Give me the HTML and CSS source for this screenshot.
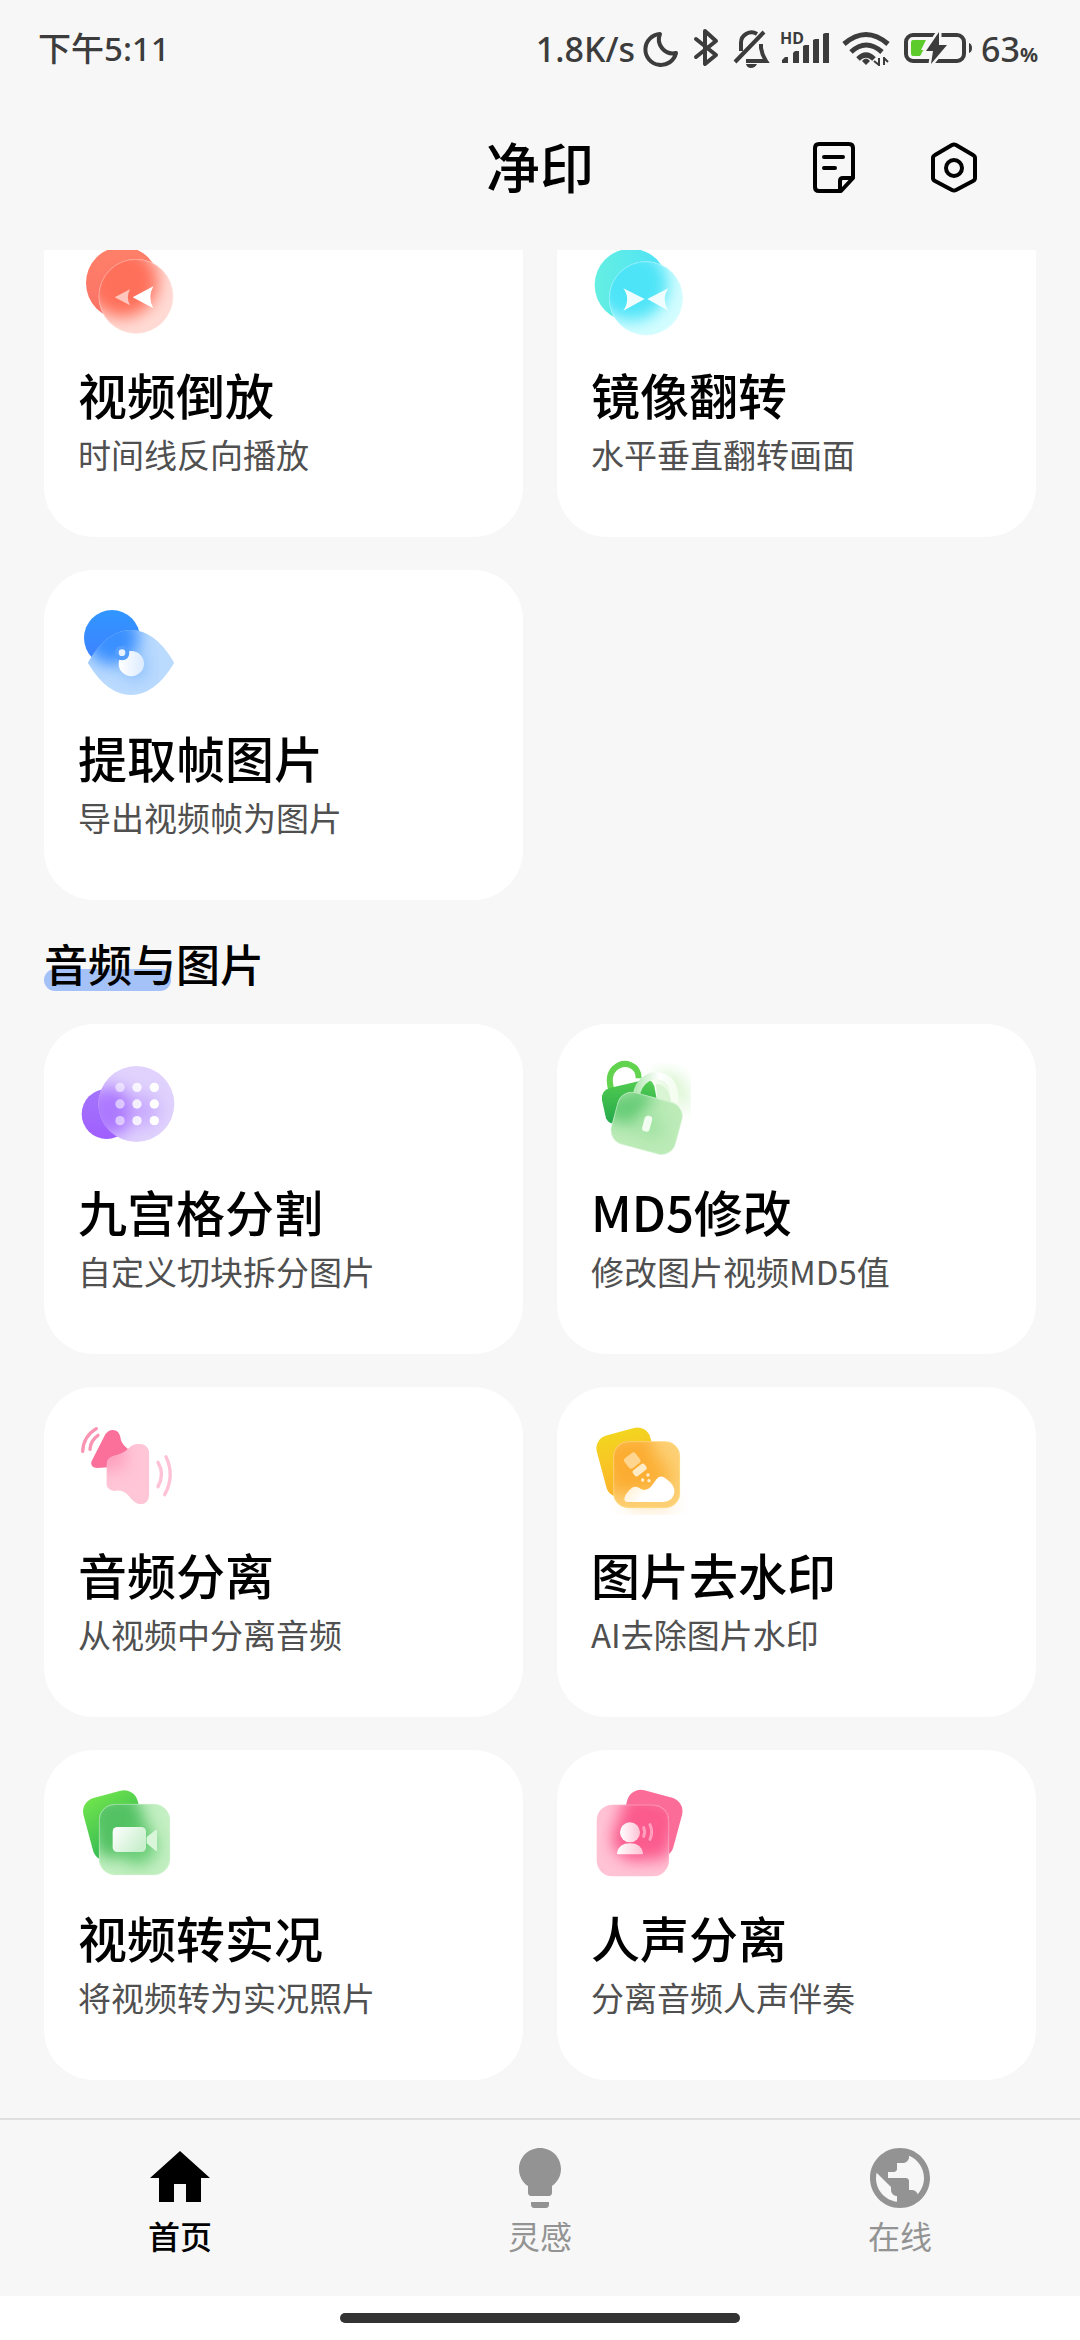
FILE: index.html
```html
<!DOCTYPE html>
<html lang="zh-CN">
<head>
<meta charset="utf-8">
<meta name="viewport" content="width=device-width, initial-scale=1">
<title>净印</title>
<link rel="stylesheet" href="styles.css">
</head>
<body>
<div class="status">
  <span class="status-time">下午5:11</span>
  <div class="status-right">
    <span class="status-speed">1.8K/s</span>
    <svg class="st-moon" viewBox="640 24 44 50" fill="none" stroke="#3c3c3c" stroke-width="4" stroke-linejoin="round"><path d="M659 34A15.500 15.500 0 1 0 675 53A14 14 0 0 1 659 34Z"/></svg>
    <svg class="st-bt" viewBox="684 24 40 50" fill="none" stroke="#3c3c3c" stroke-width="4" stroke-linejoin="round" stroke-linecap="round"><path d="M695 39L715 55L704 64V31L715 41L695 57"/></svg>
    <svg class="st-bell" viewBox="724 24 50 50" fill="none" stroke="#3c3c3c" stroke-width="4"><path d="M740 51V43A10.500 10.500 0 0 1 756 34M763 32L734 62M760 44V48Q761 55 765 61H745"/><path d="M745 64H756Q754 68 750 68T745 64Z" fill="#3c3c3c" stroke="none"/></svg>
    <svg class="st-signal" viewBox="774 24 62 50" fill="#3c3c3c"><path d="M781 63V60L784 57H787V63ZM792 63V53L794 51H798V63ZM802 63V46L804 45H808V63ZM812 63V40L814 39H818V63ZM822 63V34L824 33H828V63Z"/><text x="779" y="44" font-size="16" font-weight="700" font-family="Noto Sans, sans-serif">HD</text></svg>
    <svg class="st-wifi" viewBox="836 24 60 50" fill="none" stroke="#3c3c3c" stroke-width="5"><path d="M843 44Q865 25 887 44M850 52Q865 38 881 52M857 59Q865 51 873 59"/><path d="M861 61Q865 56 869 61L865 65Z" fill="#3c3c3c" stroke="none"/><path d="M878 66V58M878 65L873 61M883 57V65M883 58L887 62" stroke-width="2"/></svg>
    <svg class="st-battery" viewBox="896 24 80 50"><rect x="905" y="35" width="58" height="26" rx="7" fill="none" stroke="#3c3c3c" stroke-width="4"/><path d="M912 40H925L920 50H923L919 56H912Q910 56 910 53V43Q910 40 912 40Z" fill="#5ecb2c"/><path d="M938 32L925 51H932L930 64L946 45H938Z" fill="#3c3c3c" stroke="#f7f7f7" stroke-width="5" paint-order="stroke"/><path d="M968 43Q971 44 971 48T968 53Z" fill="#3c3c3c"/></svg>
    <span class="status-level">63<small>%</small></span>
  </div>
</div>

<header class="header">
  <h1>净印</h1>
  <div class="header-actions">
    <button type="button" aria-label="记录"><svg viewBox="0 0 72 72" fill="none" stroke="#000" stroke-width="4" stroke-linejoin="round" stroke-linecap="round"><path d="M21 12H51Q55 12 55 16V46L43 59H21Q17 59 17 55V16Q17 12 21 12ZM42 58V49Q42 46 45 46H54M26 25H45M26 36H37"/></svg></button>
    <button type="button" aria-label="设置"><svg viewBox="0 0 72 72" fill="none" stroke="#000" stroke-width="4" stroke-linejoin="round"><path d="M34 13Q36 12 38 13L55 23Q57 24 57 26V46Q57 48 55 49L38 58Q36 59 34 58L17 49Q15 48 15 46V26Q15 24 17 23Z"/><circle cx="36" cy="36" r="8"/></svg></button>
  </div>
</header>

<main class="content">
  <section class="grid">
    <a class="card" href="#reverse">
      <svg viewBox="144 30 300 300"><defs><clipPath id="c1"><circle cx="318" cy="202" r="112"/></clipPath><filter id="blur" x="-50%" y="-50%" width="200%" height="200%"><feGaussianBlur stdDeviation="24"/></filter><linearGradient id="g1" x2="0" y2="1"><stop stop-color="#ff8069"/><stop offset="1" stop-color="#f97266"/></linearGradient></defs><circle cx="277" cy="162" r="109" fill="url(#g1)"/><circle cx="318" cy="202" r="112" fill="#ffdbd5"/><g clip-path="url(#c1)"><circle cx="277" cy="157" r="108" fill="#ff6f5a" filter="url(#blur)"/></g><circle cx="318" cy="202" r="111" fill="none" stroke="#fff" stroke-opacity=".25" stroke-width="3"/><path d="M308 205L370 172Q352 205 370 238Z" fill="#fff"/><path d="M254 205L300 181Q287 205 300 229Z" fill="#fff" opacity=".6"/></svg>
      <h3>视频倒放</h3><p>时间线反向播放</p>
    </a>
    <a class="card" href="#mirror">
      <svg viewBox="93 30 300 300"><defs><clipPath id="c2"><circle cx="258" cy="208" r="111"/></clipPath><linearGradient id="g2" x2="1"><stop stop-color="#64efe2"/><stop offset="1" stop-color="#4fe2f8"/></linearGradient></defs><circle cx="213" cy="168" r="109" fill="url(#g2)"/><circle cx="258" cy="208" r="111" fill="#d4fdff"/><g clip-path="url(#c2)"><circle cx="215" cy="165" r="110" fill="#4de4f8" filter="url(#blur)"/></g><circle cx="258" cy="208" r="110" fill="none" stroke="#fff" stroke-opacity=".25" stroke-width="3"/><path d="M254 210L190 178Q213 210 190 245ZM262 210L325 178Q303 210 325 245Z" fill="#effdff"/></svg>
      <h3>镜像翻转</h3><p>水平垂直翻转画面</p>
    </a>
    <a class="card" href="#frames">
      <svg viewBox="144 129 300 300"><defs><clipPath id="c3"><path d="M176 316Q172 312 176 307Q232 213 303 213Q374 213 430 307Q433 312 430 316Q374 408 303 408Q232 408 176 316Z"/></clipPath><linearGradient id="g3" x2="0" y2="1"><stop stop-color="#3096ff"/><stop offset="1" stop-color="#417fff"/></linearGradient><linearGradient id="g3b" x2="1"><stop stop-color="#fff"/><stop offset="1" stop-color="#dcebff"/></linearGradient></defs><circle cx="246" cy="237" r="84" fill="url(#g3)"/><g clip-path="url(#c3)"><path d="M170 210H436V410H170Z" fill="#badafe"/><circle cx="248" cy="238" r="80" fill="#3a90ff" filter="url(#blur)"/><circle cx="315" cy="325" r="35" fill="#6fb0fa" opacity=".7" filter="url(#blur)"/></g><circle cx="304" cy="314" r="38" fill="url(#g3b)"/><circle cx="276" cy="282" r="22" fill="#539efc"/><circle cx="276" cy="281" r="10" fill="#e8f3ff"/></svg>
      <h3>提取帧图片</h3><p>导出视频帧为图片</p>
    </a>
  </section>

  <h2 class="section-title">音频与图片</h2>

  <section class="grid">
    <a class="card" href="#nine">
      <svg viewBox="54 51 300 300"><defs><clipPath id="c4"><circle cx="229" cy="195" r="114"/></clipPath><linearGradient id="g4" x2="0" y2="1"><stop stop-color="#a375fb"/><stop offset="1" stop-color="#a05fff"/></linearGradient></defs><circle cx="140" cy="225" r="75" fill="url(#g4)"/><circle cx="229" cy="195" r="114" fill="#e0d2fd"/><g clip-path="url(#c4)"><circle cx="146" cy="218" r="76" fill="#a46bff" opacity=".85" filter="url(#blur)"/><circle cx="250" cy="215" r="50" fill="#bd98ff" opacity=".6" filter="url(#blur)"/></g><g fill="#fff"><g opacity=".55"><circle cx="180" cy="145" r="14"/><circle cx="180" cy="195" r="14"/><circle cx="180" cy="245" r="14"/></g><g opacity=".82"><circle cx="231" cy="145" r="14"/><circle cx="231" cy="195" r="14"/><circle cx="231" cy="245" r="14"/></g><circle cx="283" cy="145" r="14"/><circle cx="283" cy="195" r="14"/><circle cx="283" cy="245" r="14"/></g></svg>
      <h3>九宫格分割</h3><p>自定义切块拆分图片</p>
    </a>
    <a class="card" href="#md5">
      <svg viewBox="63 51 300 300"><defs><clipPath id="c5"><rect x="130" y="172" width="200" height="162" rx="44" transform="rotate(15 230 253)"/></clipPath><linearGradient id="g5" x2="0" y2="1"><stop stop-color="#52cc50"/><stop offset="1" stop-color="#23a84c"/></linearGradient><linearGradient id="g5b" x2="1"><stop stop-color="#b5e8b4"/><stop offset=".6" stop-color="#fff"/><stop offset="1" stop-color="#f4fdf0"/></linearGradient></defs><path d="M123 150Q112 108 134 88T181 78T206 118" fill="none" stroke="#62d34e" stroke-width="18"/><path d="M96 184Q92 153 122 146L222 123Q246 118 253 142L260 180L150 255Q118 260 108 238Z" fill="url(#g5)"/><path d="M262 118Q345 110 338 205" fill="none" stroke="#aeeb9c" stroke-width="30" opacity=".7" filter="url(#blur)"/><path d="M258 135Q296 135 304 190H262Z" fill="#d9f5d3"/><path d="M198 172Q204 134 231 118T288 118Q314 134 314 180V205" fill="none" stroke="url(#g5b)" stroke-width="22"/><g clip-path="url(#c5)"><path d="M100 140H360V360H100Z" fill="#bcebb8"/><path d="M96 184L240 140L250 180L185 260L108 238Z" fill="#56c66b" opacity=".85" filter="url(#blur)"/><circle cx="245" cy="265" r="35" fill="#8cdd91" opacity=".6" filter="url(#blur)"/></g><rect x="131" y="173" width="198" height="160" rx="43" transform="rotate(15 230 253)" fill="none" stroke="#fff" stroke-opacity=".35" stroke-width="3"/><rect x="220" y="230" width="23" height="48" rx="10" transform="rotate(15 231 254)" fill="#f1fdf0"/></svg>
      <h3>MD5修改</h3><p>修改图片视频MD5值</p>
    </a>
    <a class="card" href="#audio">
      <svg viewBox="54 30 300 300"><defs><clipPath id="c6"><path d="M140 168Q140 146 160 141Q188 136 207 117Q225 100 248 106Q268 113 268 137V255Q266 286 240 286Q224 284 207 262Q190 240 162 246Q139 241 139 224Z"/></clipPath></defs><path d="M94 158L136 76Q148 60 164 64Q180 67 183 94Q187 107 204 120L205 170L112 177Q90 176 94 158Z" fill="#fa709a"/><g clip-path="url(#c6)"><path d="M130 100H280V290H130Z" fill="#ffc6d8"/><path d="M94 158L136 76L190 95L200 175L112 190Z" fill="#ff85ac" filter="url(#blur)" opacity=".6"/></g><g fill="none" stroke-linecap="round" stroke-width="10"><path d="M68 127Q70 82 109 59M90 121Q92 94 114 79" stroke="#f994b3"/><path d="M294 160Q315 195 294 233M318 143Q345 200 314 257" stroke="#ffc1d5"/></g></svg>
      <h3>音频分离</h3><p>从视频中分离音频</p>
    </a>
    <a class="card" href="#watermark">
      <svg viewBox="63 30 300 300"><defs><clipPath id="c7"><rect x="130" y="97" width="200" height="200" rx="45"/></clipPath><linearGradient id="g7" x2="0" y2="1"><stop stop-color="#f3d51f"/><stop offset="1" stop-color="#fdb12c"/></linearGradient><linearGradient id="g7b" x2="1" y2=".4"><stop stop-color="#ffe6b8"/><stop offset=".6" stop-color="#fff"/></linearGradient></defs><rect x="92" y="65" width="166" height="190" rx="40" transform="rotate(-15 175 160)" fill="url(#g7)"/><ellipse cx="240" cy="285" rx="80" ry="16" fill="#ffc978" opacity=".6" filter="url(#blur)"/><g clip-path="url(#c7)"><path d="M130 97H330V297H130Z" fill="#fdd075"/><rect x="100" y="85" width="160" height="165" rx="40" transform="rotate(-15 177 160)" fill="#fcad33" filter="url(#blur)"/><circle cx="260" cy="200" r="48" fill="#fcad33" opacity=".6" filter="url(#blur)"/></g><rect x="131" y="98" width="198" height="198" rx="44" fill="none" stroke="#ffe08a" stroke-opacity=".6" stroke-width="3"/><g transform="rotate(-38 195 170)"><rect x="177" y="134" width="42" height="38" rx="9" fill="#ffd590"/><rect x="176" y="178" width="44" height="22" rx="8" fill="#ffebc6"/></g><path d="M163 268Q166 252 186 236Q200 228 214 241Q228 248 243 233L260 210Q274 195 290 211Q315 228 313 250Q310 278 278 279H175Q162 280 163 268Z" fill="url(#g7b)"/><g fill="#fff0d0"><circle cx="234" cy="198" r="5"/><circle cx="218" cy="213" r="5"/><circle cx="237" cy="215" r="5"/></g></svg>
      <h3>图片去水印</h3><p>AI去除图片水印</p>
    </a>
    <a class="card" href="#live">
      <svg viewBox="54 39 300 300"><defs><clipPath id="c8"><rect x="117" y="105" width="213" height="213" rx="48"/></clipPath><linearGradient id="g8" x2=".3" y2="1"><stop stop-color="#72e64b"/><stop offset="1" stop-color="#2fb557"/></linearGradient><linearGradient id="g8b" x2="1" y2=".6"><stop stop-color="#fff"/><stop offset="1" stop-color="#c9efcd"/></linearGradient></defs><rect x="82" y="73" width="168" height="194" rx="42" transform="rotate(-15 166 170)" fill="url(#g8)"/><g clip-path="url(#c8)"><path d="M117 105H330V318H117Z" fill="#c3efc2"/><rect x="92" y="80" width="162" height="180" rx="42" transform="rotate(-15 168 170)" fill="#52c263" filter="url(#blur)"/><circle cx="235" cy="235" r="55" fill="#5fca6e" opacity=".8" filter="url(#blur)"/></g><rect x="118" y="106" width="211" height="211" rx="47" fill="none" stroke="#d3f5d0" stroke-opacity=".5" stroke-width="3"/><rect x="158" y="174" width="100" height="75" rx="14" fill="url(#g8b)"/><path d="M260 204L287 183Q291 181 291 186V243Q291 248 287 245L260 223Z" fill="#d9f6da"/></svg>
      <h3>视频转实况</h3><p>将视频转为实况照片</p>
    </a>
    <a class="card" href="#vocal">
      <svg viewBox="63 39 300 300"><defs><clipPath id="c9"><rect x="80" y="107" width="217" height="215" rx="48"/></clipPath><linearGradient id="g9b" x2="1"><stop stop-color="#fff"/><stop offset="1" stop-color="#ffc3d6"/></linearGradient></defs><rect x="156" y="72" width="170" height="184" rx="42" transform="rotate(15 241 164)" fill="#fb6d98"/><g clip-path="url(#c9)"><path d="M80 107H297V322H80Z" fill="#ffc3d5"/><rect x="145" y="80" width="175" height="185" rx="42" transform="rotate(15 239 164)" fill="#fb5b8e" filter="url(#blur)"/><circle cx="195" cy="222" r="55" fill="#fb5b8e" opacity=".75" filter="url(#blur)"/></g><rect x="81" y="108" width="215" height="213" rx="47" fill="none" stroke="#ffc3d5" stroke-opacity=".45" stroke-width="3"/><circle cx="180" cy="190" r="30" fill="url(#g9b)"/><path d="M141 252Q146 223 180 223T219 252Q220 256 215 256H145Q140 256 141 252Z" fill="url(#g9b)"/><path d="M221 176Q227 189 221 202M240 167Q250 189 240 211" fill="none" stroke="#ff9fbd" stroke-width="9" stroke-linecap="round"/></svg>
      <h3>人声分离</h3><p>分离音频人声伴奏</p>
    </a>
  </section>
</main>

<nav class="tabs">
  <a class="tab active" href="#home" aria-current="page"><svg viewBox="0 0 24 24"><path d="M10 20v-6h4v6h5v-8h3L12 3 2 12h3v8z"/></svg><span>首页</span></a>
  <a class="tab" href="#ideas"><svg viewBox="0 0 24 24"><path d="M9 21c0 .5.4 1 1 1h4c.6 0 1-.5 1-1v-1H9v1zm3-19C8.100 2 5 5.100 5 9c0 2.400 1.200 4.500 3 5.700V17c0 .5.4 1 1 1h6c.6 0 1-.5 1-1v-2.300c1.800-1.300 3-3.400 3-5.700 0-3.900-3.100-7-7-7z"/></svg><span>灵感</span></a>
  <a class="tab" href="#online"><svg viewBox="0 0 24 24"><path d="M12 2C6.480 2 2 6.480 2 12s4.480 10 10 10 10-4.480 10-10S17.520 2 12 2zm-1 17.930c-3.950-.49-7-3.850-7-7.930 0-.62.08-1.210.21-1.790L9 15v1c0 1.100.9 2 2 2v1.930zm6.900-2.540c-.26-.81-1-1.390-1.900-1.390h-1v-3c0-.55-.45-1-1-1H8v-2h2c.55 0 1-.45 1-1V7h2c1.100 0 2-.9 2-2v-.41c2.930 1.190 5 4.060 5 7.410 0 2.080-.8 3.970-2.100 5.390z"/></svg><span>在线</span></a>
</nav>
<div class="gesture"><span class="gesture-bar"></span></div>
</body>
</html>
```

FILE: styles.css
```css
* {
  box-sizing: border-box;
  margin: 0;
  padding: 0;
}

body {
  display: flex;
  flex-direction: column;
  height: 100vh;
  background: #f7f7f7;
  color: #000;
  font-family: "Noto Sans CJK SC", "Noto Sans", sans-serif;
}

a {
  color: inherit;
  text-decoration: none;
}

svg {
  display: block;
  flex: none;
}

/* System status bar */
.status {
  display: flex;
  flex: none;
  align-items: center;
  justify-content: space-between;
  height: 98px;
  padding: 0 42px 0 38px;
  color: #3c3c3c;
  font-family: "Noto Sans", "Noto Sans CJK SC", sans-serif;
  font-size: 34px;
  font-weight: 500;
  line-height: 48px;
}

.status-time {
  font-size: 33px;
}

.status-right {
  display: flex;
  align-items: center;
}

.status-right svg {
  height: 50px;
}

.status-speed { margin-right: 6px; }
.status-level { margin-left: 4px; }
.status-level small {
  font-size: 20px;
  font-weight: 700;
  line-height: 1;
}
.st-moon { width: 44px; }
.st-bt { width: 40px; }
.st-bell { width: 50px; }
.st-signal { width: 62px; }
.st-wifi { width: 60px; }
.st-battery { width: 80px; }

/* App header */
.header {
  display: grid;
  flex: none;
  grid-template-columns: 1fr auto 1fr;
  align-items: center;
  height: 152px;
  padding-bottom: 12px;
}

.header h1 {
  grid-column: 2;
  padding-bottom: 4px;
  font-size: 54px;
  font-weight: 500;
  line-height: 72px;
}

.header-actions {
  display: flex;
  justify-content: flex-end;
  gap: 48px;
  padding-right: 90px;
}

.header-actions button {
  width: 72px;
  height: 72px;
  border: 0;
  background: none;
}

/* Tool list, resting at the end of its scroll */
.content {
  display: flex;
  flex: 1;
  flex-direction: column;
  justify-content: flex-end;
  min-height: 0;
  padding: 0 44px 38px;
  overflow: hidden;
}

.grid {
  display: grid;
  flex: none;
  grid-template-columns: 1fr 1fr;
  gap: 33px 34px;
}

.card {
  padding: 32px 34px 59px;
  border-radius: 50px;
  background: #fff;
}

.card svg {
  width: 100px;
  height: 100px;
}

.card h3 {
  margin-top: 23px;
  font-size: 49px;
  font-weight: 500;
  line-height: 64px;
}

.card p {
  margin-top: 4px;
  color: #505050;
  font-size: 33px;
  line-height: 48px;
}

.section-title {
  position: relative;
  z-index: 0;
  flex: none;
  margin: 31px 0 29px;
  font-size: 44px;
  font-weight: 500;
  line-height: 64px;
}

.section-title::before {
  content: "";
  position: absolute;
  z-index: -1;
  bottom: 4px;
  left: 0;
  width: 127px;
  height: 22px;
  border-radius: 11px;
  background: #a4c2f8;
}

/* Bottom tabs */
.tabs {
  display: grid;
  flex: none;
  grid-template-columns: repeat(3, 1fr);
  padding: 22px 0 40px;
  border-top: 2px solid #e0e0e0;
}

.tab {
  display: flex;
  flex-direction: column;
  align-items: center;
  color: #939393;
  font-size: 32px;
  line-height: 42px;
}

.tab svg {
  width: 72px;
  height: 72px;
  fill: currentColor;
}

.tab.active {
  color: #000;
  font-weight: 500;
}

.gesture {
  display: flex;
  flex: none;
  align-items: center;
  justify-content: center;
  height: 44px;
  background: #fff;
}

.gesture-bar {
  width: 400px;
  height: 10px;
  border-radius: 5px;
  background: #333;
}
```
